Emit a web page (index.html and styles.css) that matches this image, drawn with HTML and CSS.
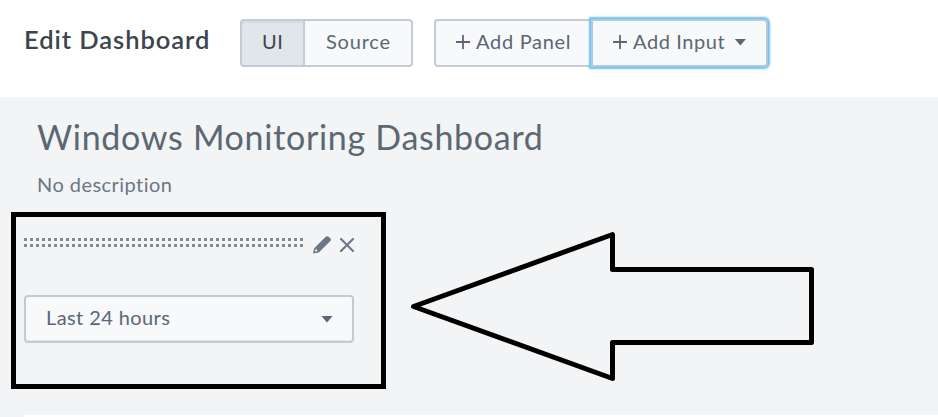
FILE: index.html
```html
<!DOCTYPE html>
<html lang="en">
<head>
<meta charset="utf-8">
<title>Edit Dashboard</title>
<link rel="stylesheet" href="styles.css">
</head>
<body>
<header class="toolbar">
  <h1 class="toolbar-title">Edit Dashboard</h1>
  <div class="group view-group">
    <button class="btn btn-ui"><span>UI</span></button>
    <button class="btn btn-source"><span>Source</span></button>
  </div>
  <div class="group add-group">
    <button class="btn btn-panel"><svg class="plus" viewBox="0 0 14 14"><path d="M7 0v14M0 7h14"/></svg><span>Add Panel</span></button>
    <button class="btn btn-input"><svg class="plus" viewBox="0 0 14 14"><path d="M7 0v14M0 7h14"/></svg><span>Add Input</span><i class="caret"></i></button>
  </div>
</header>
<main class="dashboard">
  <h2 class="title">Windows Monitoring Dashboard</h2>
  <p class="description">No description</p>
  <div class="inputs-row">
    <section class="input-box">
      <div class="input-head">
        <div class="drag-handle"></div>
        <svg class="pencil" viewBox="0 0 18 18"><path fill-rule="evenodd" d="M0 17.6 1.2 12.2 12.2 1.2Q13.8-.2 15.3 .5L17.5 2.6Q18.4 3.8 17.1 5.3L5.8 16.4ZM1.9 15.8 4.4 15.1 4 13.6 2.6 13.1Z"/></svg>
        <svg class="close" viewBox="0 0 14 14"><path d="M1 1 13 13M13 1 1 13"/></svg>
      </div>
      <button class="select"><span>Last 24 hours</span><i class="caret"></i></button>
    </section>
    <svg class="arrow" viewBox="0 0 406 152"><path d="M3.5 75.5 202.5 3.5V38.5H401.5V111.5H202.5V147.5Z"/></svg>
  </div>
  <div class="panel"></div>
</main>
</body>
</html>
```
FILE: styles.css
```css
* { box-sizing: border-box; }
body {
  margin: 0;
  height: 417px;
  overflow: hidden;
  background: #f2f4f5;
  font-family: Lato, "Liberation Sans", sans-serif;
  color: #5c6773;
}
h1, h2, p { margin: 0; white-space: nowrap; }
.toolbar {
  display: flex;
  height: 97px;
  padding: 19px 0 0 24px;
  background: #fff;
}
.toolbar-title {
  width: 216px;
  font-size: 25.5px;
  line-height: 41px;
  font-weight: 600;
  letter-spacing: 0.95px;
  color: #3c444d;
}
.group { display: flex; height: 48px; }
.add-group { margin-left: 21px; }
.btn {
  display: flex;
  align-items: center;
  height: 48px;
  padding: 0 0 2px 20px;
  border: 2px solid #c3cbd4;
  background: #f7f9fa;
  color: #5c6773;
  font: 400 20px Lato, "Liberation Sans", sans-serif;
  letter-spacing: 0.6px;
  white-space: nowrap;
}
.btn span, .select span { padding-bottom: 2px; }
.btn-ui {
  width: 65px;
  border-radius: 4px 0 0 4px;
  background: #e1e6eb;
  box-shadow: inset 0 2px 1px #d5dce3;
  color: #3c444d;
}
.btn-source { width: 110px; margin-left: -2px; padding-left: 21px; border-radius: 0 4px 4px 0; letter-spacing: 0.8px; }
.btn-panel { width: 158px; border-radius: 4px 0 0 4px; letter-spacing: 0.7px; }
.btn-input {
  width: 177px;
  margin-left: -1px;
  border-radius: 0 4px 4px 0;
  border-color: #b2cbdc;
  box-shadow: 0 0 2px 2px #6ec1ef;
}
.plus { width: 14px; height: 14px; margin-right: 6px; flex: none; }
.plus path { stroke: #5c6773; stroke-width: 1.8; fill: none; }
.caret {
  width: 12px;
  height: 7px;
  background: #5c6773;
  clip-path: polygon(0 0, 100% 0, 50% 100%);
}
.btn .caret { margin-left: 9px; }
.dashboard { display: flex; flex-direction: column; }
.title {
  margin: 19px 0 0 37px;
  font-size: 34px;
  line-height: 42px;
  font-weight: 400;
  letter-spacing: 0.7px;
}
.description {
  margin: 14px 0 0 37px;
  font-size: 20px;
  line-height: 24px;
  letter-spacing: 0.45px;
  color: #6b7785;
}
.inputs-row { display: flex; margin: 16px 0 0 11px; }
.input-box {
  width: 375px;
  height: 177px;
  border: 5px solid #000;
  padding: 19px 0 0 8px;
}
.input-head { display: flex; height: 59px; }
.drag-handle {
  width: 279px;
  height: 9px;
  margin-top: 2px;
  background: conic-gradient(from 0deg at 3px 3px, transparent 75%, #818a92 0) 0 0 / 6px 6px;
}
.pencil { width: 18px; height: 18px; margin: 0 0 0 10px; fill: #6b7785; }
.close { width: 14px; height: 14px; margin: 2px 0 0 9px; fill: none; stroke: #6b7785; stroke-width: 2.1; stroke-linecap: round; }
.select {
  display: flex;
  align-items: center;
  justify-content: space-between;
  width: 330px;
  height: 48px;
  padding: 0 19px 2px 20px;
  border: 2px solid #c3cbcf;
  border-radius: 4px;
  box-shadow: inset 0 -1px 0 #e3e8eb;
  background: #f7f9fa;
  color: #5c6773;
  font: 400 20px Lato, "Liberation Sans", sans-serif;
  letter-spacing: 0.4px;
}
.select .caret { margin-top: 2px; }
.arrow { width: 406px; height: 152px; margin: 19px 0 0 24px; fill: none; stroke: #000; stroke-width: 5; stroke-linejoin: round; }
.panel { height: 2px; margin: 26px 0 0 24px; background: #fff; }
```
